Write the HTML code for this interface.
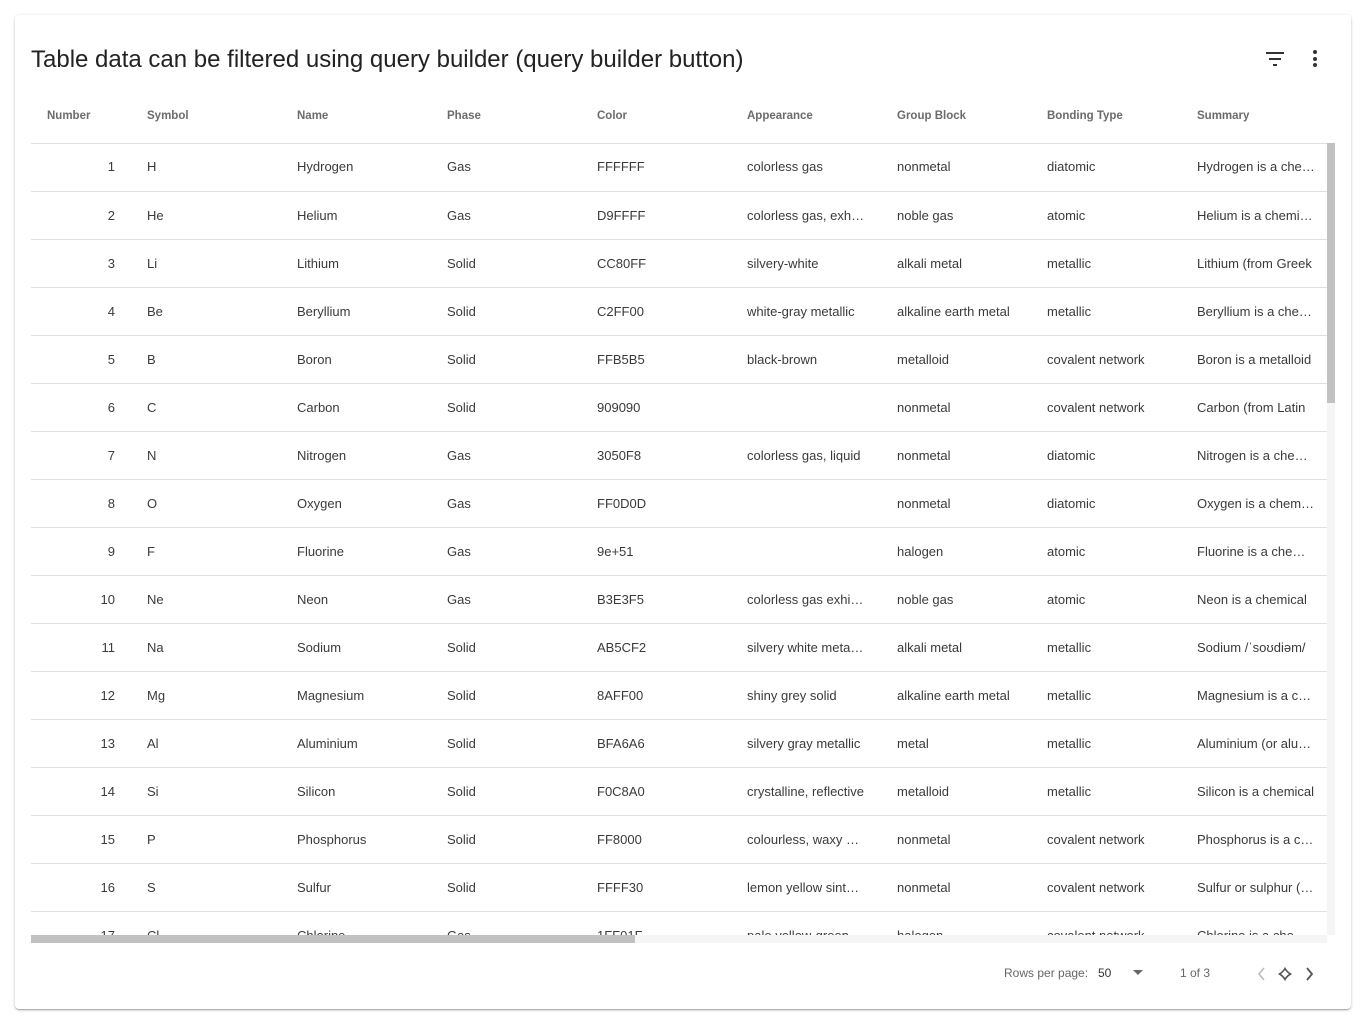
<!DOCTYPE html>
<html><head><meta charset="utf-8"><style>
*{box-sizing:border-box;margin:0;padding:0}
body{width:1366px;height:1024px;background:#fff;font-family:"Liberation Sans",Arial,sans-serif;position:relative;overflow:hidden}
.card{position:absolute;left:15px;top:15px;width:1336px;height:994px;border-radius:4px;background:#fff;box-shadow:0 1px 3px rgba(0,0,0,.2),0 1px 1px rgba(0,0,0,.14),0 2px 1px -1px rgba(0,0,0,.12)}
.title{position:absolute;left:31px;top:46px;font-size:24px;color:#222;white-space:nowrap}
.hdr{position:absolute;top:110px;font-size:11.5px;font-weight:bold;color:#6b6b6b;white-space:nowrap}
.body{position:absolute;left:31px;top:143px;width:1296px;height:792px;overflow:hidden}
.row{position:absolute;left:0;width:1296px;height:48px;border-top:1px solid #e0e0e0}
.c{position:absolute;top:16px;font-size:13px;color:#3a3a3a;white-space:nowrap;overflow:hidden;text-overflow:ellipsis;width:118px}
.n{left:0;width:84px;text-align:right}
.ft{position:absolute;top:966px;font-size:12px;color:#666;white-space:nowrap}
</style></head><body>
<div class="card"></div>
<div class="title">Table data can be filtered using query builder (query builder button)</div>
<svg style="position:absolute;left:1264px;top:49px" width="22" height="20"><rect x="2" y="3" width="18" height="2" fill="#333"/><rect x="5" y="9" width="12" height="2" fill="#333"/><rect x="9" y="15" width="4" height="2" fill="#333"/></svg>
<svg style="position:absolute;left:1310px;top:48px" width="10" height="22"><circle cx="5" cy="4" r="2" fill="#333"/><circle cx="5" cy="11" r="2" fill="#333"/><circle cx="5" cy="17" r="2" fill="#333"/></svg>
<div class="hdr" style="left:47px">Number</div>
<div class="hdr" style="left:147px">Symbol</div>
<div class="hdr" style="left:297px">Name</div>
<div class="hdr" style="left:447px">Phase</div>
<div class="hdr" style="left:597px">Color</div>
<div class="hdr" style="left:747px">Appearance</div>
<div class="hdr" style="left:897px">Group Block</div>
<div class="hdr" style="left:1047px">Bonding Type</div>
<div class="hdr" style="left:1197px">Summary</div>
<div class="body" id="b"></div>
<div style="position:absolute;left:1327px;top:143px;width:8px;height:792px;background:#f5f5f5"></div>
<div style="position:absolute;left:1327px;top:143px;width:8px;height:260px;background:#c1c1c1"></div>
<div style="position:absolute;left:31px;top:935px;width:1296px;height:8px;background:#f5f5f5"></div>
<div style="position:absolute;left:31px;top:935px;width:604px;height:8px;background:#c1c1c1"></div>
<div class="ft" style="left:1004px">Rows per page:</div>
<div class="ft" style="left:1098px;color:#333">50</div>
<svg style="position:absolute;left:1133px;top:970px" width="10" height="6"><path d="M0 0L10 0L5 5Z" fill="#666"/></svg>
<div class="ft" style="left:1180px">1 of 3</div>
<svg style="position:absolute;left:1254px;top:965px" width="64" height="18"><path d="M10 3L5 9L10 15" stroke="#bbb" stroke-width="1.6" fill="none"/><path d="M31 3.5Q33 7 36.5 9Q33 11 31 14.5Q29 11 25.5 9Q29 7 31 3.5Z" stroke="#555" stroke-width="1.6" fill="none"/><path d="M53 3L58 9L53 15" stroke="#555" stroke-width="1.8" fill="none"/></svg>
<script>
var d=[["1","H","Hydrogen","Gas","FFFFFF","colorless gas","nonmetal","diatomic","Hydrogen is a chemical"],
["2","He","Helium","Gas","D9FFFF","colorless gas, exhibiting","noble gas","atomic","Helium is a chemical"],
["3","Li","Lithium","Solid","CC80FF","silvery-white","alkali metal","metallic","Lithium (from Greek"],
["4","Be","Beryllium","Solid","C2FF00","white-gray metallic","alkaline earth metal","metallic","Beryllium is a chemical"],
["5","B","Boron","Solid","FFB5B5","black-brown","metalloid","covalent network","Boron is a metalloid"],
["6","C","Carbon","Solid","909090","","nonmetal","covalent network","Carbon (from Latin"],
["7","N","Nitrogen","Gas","3050F8","colorless gas, liquid","nonmetal","diatomic","Nitrogen is a chemical"],
["8","O","Oxygen","Gas","FF0D0D","","nonmetal","diatomic","Oxygen is a chemical"],
["9","F","Fluorine","Gas","9e+51","","halogen","atomic","Fluorine is a chemical"],
["10","Ne","Neon","Gas","B3E3F5","colorless gas exhibiting","noble gas","atomic","Neon is a chemical"],
["11","Na","Sodium","Solid","AB5CF2","silvery white metallic","alkali metal","metallic","Sodium /ˈsoʊdiəm/"],
["12","Mg","Magnesium","Solid","8AFF00","shiny grey solid","alkaline earth metal","metallic","Magnesium is a chemical"],
["13","Al","Aluminium","Solid","BFA6A6","silvery gray metallic","metal","metallic","Aluminium (or aluminum"],
["14","Si","Silicon","Solid","F0C8A0","crystalline, reflective","metalloid","metallic","Silicon is a chemical"],
["15","P","Phosphorus","Solid","FF8000","colourless, waxy white","nonmetal","covalent network","Phosphorus is a chemical"],
["16","S","Sulfur","Solid","FFFF30","lemon yellow sintered","nonmetal","covalent network","Sulfur or sulphur (British"],
["17","Cl","Chlorine","Gas","1FF01F","pale yellow-green","halogen","covalent network","Chlorine is a chemical"]];
var x=[116,266,416,566,716,866,1016,1166],h="";
d.forEach(function(r,i){h+='<div class="row" style="top:'+(i*48)+'px;'+(i==0?'border-top:none':'')+'"><div class="c n">'+r[0]+'</div>';
for(var j=1;j<9;j++)h+='<div class="c" style="left:'+x[j-1]+'px">'+r[j]+'</div>';h+='</div>';});
document.getElementById('b').innerHTML=h;
</script>
<div style="position:absolute;left:31px;top:143px;width:1296px;height:1px;background:#e0e0e0"></div>
</body></html>
